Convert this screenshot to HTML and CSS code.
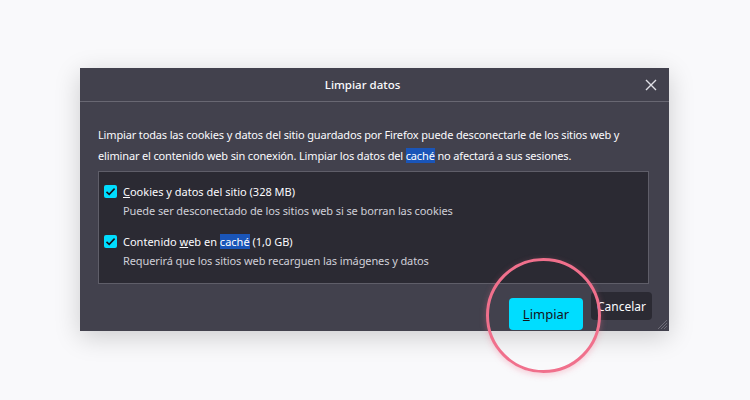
FILE: index.html
```html
<!DOCTYPE html>
<html lang="es">
<head>
    <meta charset="UTF-8">
    <title>Limpiar datos</title>
    <link rel="stylesheet" href="styles.css">
</head>
<body>
    <div class="dialog">
        <div class="titlebar">
            <span class="title">Limpiar datos</span>
            <svg class="close" width="12" height="12" viewBox="0 0 12 12">
                <path d="M1 1 L11 11 M11 1 L1 11" stroke="#e0e0e6" stroke-width="1.4" fill="none"/>
            </svg>
        </div>
        <div class="content">
            <p class="intro">Limpiar todas las cookies y datos del sitio guardados por Firefox puede desconectarle de los sitios web y eliminar el contenido web sin conexión. Limpiar los datos del <span class="hl">caché</span> no afectará a sus sesiones.</p>
            <div class="listbox">
                <div class="item">
                    <div class="row">
                        <span class="check"><svg width="13" height="13" viewBox="0 0 13 13"><path d="M2.5 6.8 L5.2 9.4 L10.6 3.6" stroke="#15141a" stroke-width="1.6" fill="none"/></svg></span>
                        <span><u>C</u>ookies y datos del sitio (328 MB)</span>
                    </div>
                    <div class="desc">Puede ser desconectado de los sitios web si se borran las cookies</div>
                </div>
                <div class="item">
                    <div class="row">
                        <span class="check"><svg width="13" height="13" viewBox="0 0 13 13"><path d="M2.5 6.8 L5.2 9.4 L10.6 3.6" stroke="#15141a" stroke-width="1.6" fill="none"/></svg></span>
                        <span>Contenido <u>w</u>eb en <span class="hl">caché</span> (1,0 GB)</span>
                    </div>
                    <div class="desc">Requerirá que los sitios web recarguen las imágenes y datos</div>
                </div>
            </div>
            <div class="footer">
                <button class="btn primary"><u>L</u>impiar</button>
                <button class="btn">Cancelar</button>
            </div>
        </div>
        <svg class="grip" width="12" height="12" viewBox="0 0 12 12">
            <path d="M11 2 L2 11 M11 5 L5 11 M11 8 L8 11" stroke="#6e6d78" stroke-width="1" fill="none"/>
        </svg>
    </div>
    <div class="ring"></div>
</body>
</html>
```

FILE: styles.css
```css
body {
    margin: 0;
    width: 750px;
    height: 400px;
    background-color: #f9f9fb;
    font-family: "Noto Sans", "Open Sans", sans-serif;
    position: relative;
    overflow: hidden;
    padding-top: 68px;
    box-sizing: border-box;
}

.dialog {
    position: relative;
    margin-left: 80px;
    width: 589px;
    height: 263px;
    background-color: #42414d;
    box-shadow: 0 6px 24px rgba(0, 0, 0, 0.18);
    color: #fbfbfe;
}

.titlebar {
    height: 33px;
    border-bottom: 1px solid #686772;
    display: flex;
    align-items: center;
    justify-content: center;
    padding-right: 24px;
    position: relative;
}

.title {
    font-size: 11.5px;
    font-weight: 500;
}

.close {
    position: absolute;
    right: 12px;
    top: 11px;
}

.content {
    padding: 22px 20px 0 18px;
}

.intro {
    margin: 0;
    font-size: 11px;
    line-height: 21px;
    letter-spacing: -0.15px;
}

.hl {
    background-color: #1a55b8;
    color: #ffffff;
}

.listbox {
    margin-top: 5px;
    height: 113px;
    box-sizing: border-box;
    background-color: #2b2a33;
    border: 1px solid #5f5e69;
    padding: 9px 6px 0 5px;
    font-size: 11px;
}

.item {
    margin-bottom: 10px;
}

.row {
    display: flex;
    align-items: center;
    height: 20px;
}

.check {
    width: 13px;
    height: 13px;
    background-color: #00ddff;
    border-radius: 2px;
    margin-right: 6px;
    display: flex;
}

.desc {
    height: 20px;
    line-height: 20px;
    padding-left: 19px;
    color: #cfcfd8;
    letter-spacing: -0.1px;
}

.footer {
    display: flex;
    justify-content: flex-end;
    align-items: flex-start;
    gap: 8px;
    margin-top: 8px;
    margin-right: -3px;
}

.btn {
    font-family: inherit;
    font-size: 12px;
    color: #fbfbfe;
    background-color: #2b2a33;
    border: none;
    border-radius: 4px;
    height: 28px;
    width: 61px;
    padding: 0;
}

.btn.primary {
    margin-top: 6px;
    height: 32px;
    width: 74px;
    font-size: 13px;
    background-color: #00ddff;
    color: #15141a;
}

.grip {
    position: absolute;
    right: 1px;
    bottom: 1px;
}

.ring {
    position: absolute;
    left: 486px;
    top: 258px;
    width: 109px;
    height: 109px;
    border: 3px solid #f0708c;
    border-radius: 50%;
    box-shadow: 0 2px 6px rgba(240, 112, 140, 0.35);
}
```
